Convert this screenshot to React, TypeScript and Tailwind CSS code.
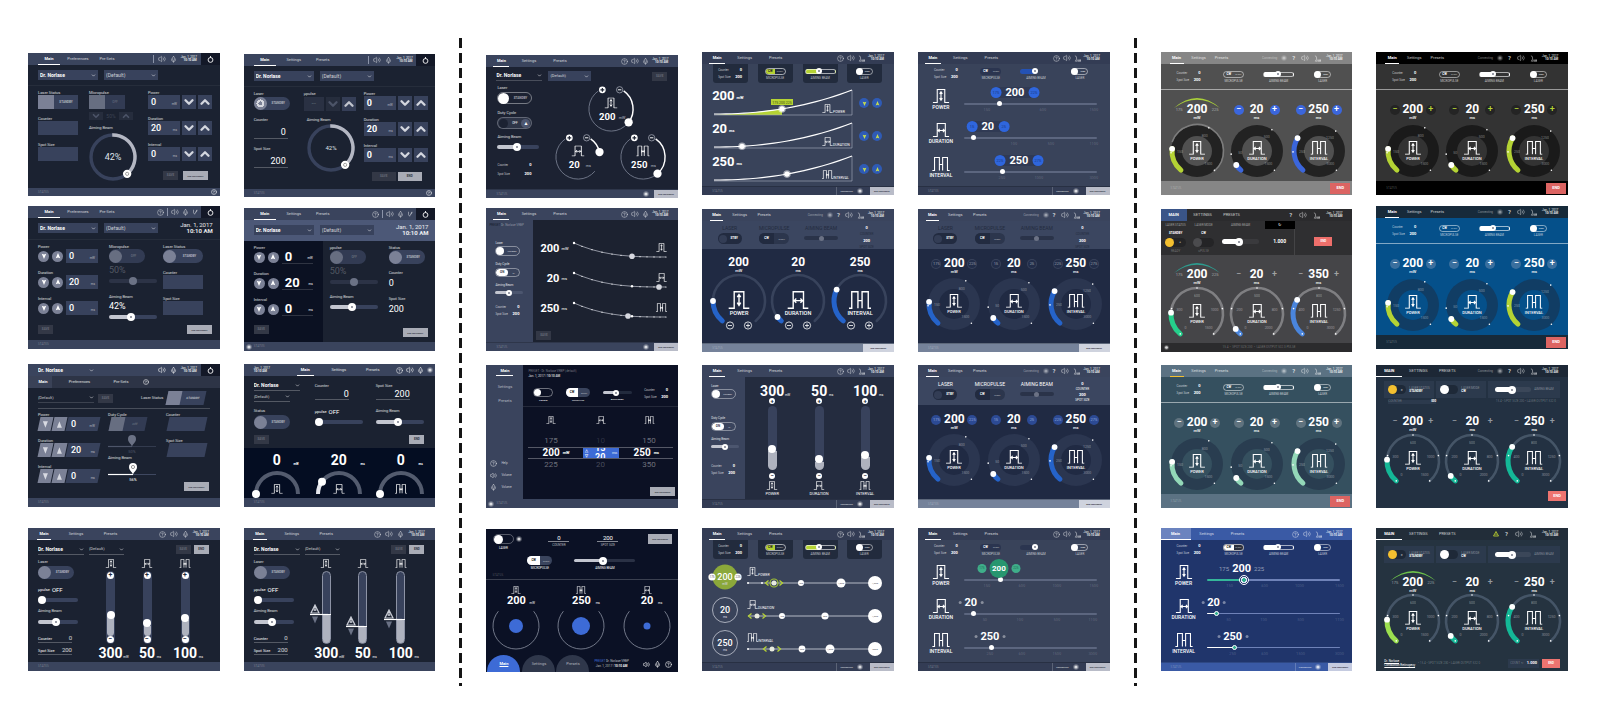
import type { ReactNode } from "react";
import { ChevronDown, ChevronUp, CircleHelp, Mic, Volume2 } from "lucide-react";

type Kind = "power" | "duration" | "interval";
const KINDS: Kind[] = ["power", "duration", "interval"];

const pt = (a: number, r: number): [number, number] => [
  r * Math.cos((a * Math.PI) / 180),
  r * Math.sin((a * Math.PI) / 180),
];
const arc = (r: number, a: number, b: number) => {
  const [x1, y1] = pt(a, r);
  const [x2, y2] = pt(b, r);
  return `M${x1.toFixed(2)} ${y1.toFixed(2)}A${r} ${r} 0 ${b - a > 180 ? 1 : 0} 1 ${x2.toFixed(2)} ${y2.toFixed(2)}`;
};

/* ---------- icons ---------- */

const PULSE: Record<Kind, string> = {
  power: "M1 25h8V1h14v24h8M16 5v16M13.500 9l2.500-4 2.500 4M13.500 17l2.500 4 2.500-4",
  duration: "M1 25h8V1h15v24h7M9 14h15M13.500 11l-3 3 3 3M19.500 11l3 3-3 3",
  interval: "M0 25h4V1h9v24M19 25V1h9v24h4M13 14h6M4 25h1M13 11v6M19 11v6M14 14h4",
};

function Pulse({ kind, className }: { kind: Kind; className?: string }) {
  return (
    <svg viewBox="0 0 32 26" className={className} fill="none" stroke="currentColor" strokeWidth="2" aria-hidden>
      <path d={PULSE[kind]} />
    </svg>
  );
}

function PulseMark({ kind, x, y, w }: { kind: Kind; x: number; y: number; w: number }) {
  return (
    <svg x={x} y={y} width={w} height={(w * 26) / 32} viewBox="0 0 32 26" fill="none" stroke="#fff" strokeWidth="2">
      <path d={PULSE[kind]} />
    </svg>
  );
}

function FootIcon() {
  return (
    <svg viewBox="0 0 16 16" className="size-[7px]" fill="none" stroke="currentColor" strokeWidth="1.5" aria-hidden>
      <path d="M2 1c5 3 5 9 1 13h4M9 14v-4M12 14v-4M15 14v-4M8 14h8" />
    </svg>
  );
}

function SlashIcon() {
  return (
    <svg viewBox="0 0 16 16" className="size-[6px]" fill="none" stroke="currentColor" strokeWidth="1.5" aria-hidden>
      <path d="M4 2v8l3 4L13 2M11 9l3-6" />
    </svg>
  );
}

function PowerIcon() {
  return (
    <svg viewBox="0 0 16 16" className="size-[7px]" fill="none" stroke="#fff" strokeWidth="2" aria-hidden>
      <circle cx="8" cy="9" r="5.5" />
      <path d="M8 0v4" />
    </svg>
  );
}

function Sun({ className = "size-[6px]" }: { className?: string }) {
  return (
    <svg viewBox="0 0 12 12" className={className} aria-hidden>
      <circle cx="6" cy="6" r="5.5" fill="#fff" opacity=".3" />
      <circle cx="6" cy="6" r="3.2" fill="#fff" opacity=".75" />
    </svg>
  );
}

/* ---------- shared controls ---------- */

type IconKey = "help" | "q" | "line" | "vol" | "mic" | "foot" | "slash" | "date" | "power" | "conn" | "sun" | "tri";

function HeaderIcon({ k }: { k: IconKey }) {
  switch (k) {
    case "help":
      return <CircleHelp className="size-[7px]" strokeWidth={1.8} />;
    case "q":
      return <span className="w-1 text-[6px] font-bold">?</span>;
    case "line":
      return <span className="h-2 w-px bg-[#8b93a8]" />;
    case "vol":
      return <Volume2 className="size-[8px]" strokeWidth={1.6} />;
    case "mic":
      return <Mic className="size-[7px]" strokeWidth={1.8} />;
    case "foot":
      return <FootIcon />;
    case "slash":
      return <SlashIcon />;
    case "sun":
      return <Sun />;
    case "tri":
      return (
        <svg viewBox="0 0 12 12" className="size-[6px]" fill="none" stroke="#c6dc2f" strokeWidth="1.6" aria-hidden>
          <path d="M6 1l5 9H1zM6 5v3" />
        </svg>
      );
    case "conn":
      return (
        <span className="flex items-center gap-1 text-[3px] opacity-60">
          Connecting
          <Sun />
        </span>
      );
    case "date":
      return <DateText />;
    case "power":
      return (
        <button aria-label="Power" className="flex h-full w-[19px] items-center justify-center bg-[#131827]">
          <PowerIcon />
        </button>
      );
  }
}

function DateText({ className = "w-4 text-right" }: { className?: string }) {
  return (
    <span className={`shrink-0 text-[3px] leading-[3px] whitespace-nowrap text-white/90 ${className}`}>
      Jan. 1, 2017
      <br />
      <b>10:10 AM</b>
    </span>
  );
}

interface HeaderProps {
  tabs?: string[];
  cols: string;
  bg: string;
  icons: IconKey[];
  end?: string;
  active?: string;
}

function Header({
  tabs = ["Main", "Settings", "Presets"],
  cols,
  bg,
  icons,
  end = "gap-[3px] pr-[10px]",
  active = "border-white",
}: HeaderProps) {
  return (
    <header className={`flex h-3 shrink-0 justify-between text-white/75 ${bg}`}>
      <nav className={`grid ${cols}`}>
        {tabs.map((t, i) => (
          <button
            key={t}
            className={`flex items-center justify-center border-b text-[4px] whitespace-nowrap ${
              i === 0 ? `font-bold text-white ${active}` : "border-transparent"
            }`}
          >
            {t}
          </button>
        ))}
      </nav>
      <div className={`flex items-center ${end}`}>
        {icons.map((k) => (
          <HeaderIcon key={k} k={k} />
        ))}
      </div>
    </header>
  );
}

const TABS_WIDE = "grid-cols-[22px_36px_22px] pl-[10px]";
const TABS_MID = "grid-cols-[14px_50px_19px] pl-[9px]";
const TABS_C = "grid-cols-[16px_39px_23px] pl-[7px]";
const TABS_D = "grid-cols-[13px_33px_16px] pl-[8px]";
const TABS_F = "grid-cols-[14px_30px_16px] pl-[9px]";
const TABS_CAPS = "grid-cols-[26px_32px_26px]";

function Panel({ bg, children }: { bg: string; children: ReactNode }) {
  return <article className={`flex h-[143px] flex-col overflow-hidden text-white ${bg}`}>{children}</article>;
}

function Status({
  bg = "bg-[#3a445d]",
  h = "h-[9px]",
  lead,
  children,
}: {
  bg?: string;
  h?: string;
  lead?: ReactNode;
  children?: ReactNode;
}) {
  return (
    <footer
      className={`mt-auto flex shrink-0 items-center gap-[2px] text-[3px] text-white/30 ${lead ? "pl-[2px]" : "pl-[10px]"} ${h} ${bg}`}
    >
      {lead}
      STATUS
      {children}
    </footer>
  );
}

function Small({ text, size = "text-[3px]", className }: { text: string; size?: string; className: string }) {
  return (
    <button className={`flex shrink-0 items-center justify-center font-bold whitespace-nowrap ${size} ${className}`}>
      {text}
    </button>
  );
}
const Save = ({ className = "h-[9px] w-[15px]" }: { className?: string }) => (
  <Small text="SAVE" className={`bg-[#333846] text-[#666b79] ${className}`} />
);
const End = ({ text = "END TREATMENT", className = "h-[9px] w-[25px]" }: { text?: string; className?: string }) => (
  <Small
    text={text}
    size={text === "END" ? "text-[3px]" : "text-[2px]"}
    className={`bg-[#a9acb6] text-[#2a2f3c] ${className}`}
  />
);

function Label({ children, size = "text-[4px]", className = "" }: { children: ReactNode; size?: string; className?: string }) {
  return <span className={`block h-[4px] whitespace-nowrap text-white/80 ${size} ${className}`}>{children}</span>;
}

function Pick({ value, name, className, bold }: { value: string; name: string; className: string; bold?: boolean }) {
  return (
    <label className={`flex h-[10px] items-center ${className}`}>
      <select
        aria-label={name}
        className={`min-w-0 flex-1 appearance-none bg-transparent leading-none ${bold ? "font-bold" : "text-white/75"}`}
      >
        <option>{value}</option>
      </select>
      <ChevronDown className="size-[5px] shrink-0 text-white/80" strokeWidth={3} />
    </label>
  );
}

function Toggle({
  name,
  text = "",
  box,
  knob,
  textClass = "text-[3px] text-white/60",
}: {
  name: string;
  text?: string;
  box: string;
  knob: string;
  textClass?: string;
}) {
  return (
    <button role="switch" aria-checked="false" aria-label={name} className={`flex shrink-0 items-center ${box}`}>
      <span className={`flex shrink-0 items-center justify-center ${knob}`} />
      <span className={`flex-1 text-center font-bold ${textClass}`}>{text}</span>
    </button>
  );
}

/* Two-way switch whose active half carries its own caption. */
function Duo({ a, b, box, on }: { a: string; b: string; box: string; on: string }) {
  return (
    <button
      role="switch"
      aria-checked="true"
      aria-label={`${a} / ${b}`}
      className={`flex items-stretch overflow-hidden rounded-full font-bold ${box}`}
    >
      <span className={`flex w-1/2 items-center justify-center text-[3px] ${on}`}>{a}</span>
      <span className="flex w-1/2 items-center justify-center text-[2px] text-white/50">{b}</span>
    </button>
  );
}

const THUMB =
  "[&::-webkit-slider-thumb]:appearance-none [&::-webkit-slider-thumb]:rounded-full [&::-webkit-slider-thumb]:bg-[radial-gradient(circle,#9a9da8_1px,#fff_1px)]";
const T_L = `${THUMB} [&::-webkit-slider-thumb]:size-[8px]`;
const T_M = `${THUMB} [&::-webkit-slider-thumb]:size-[6px]`;
const T_GRAY =
  "[&::-webkit-slider-thumb]:appearance-none [&::-webkit-slider-thumb]:rounded-full [&::-webkit-slider-thumb]:size-[8px] [&::-webkit-slider-thumb]:bg-[#6b7285]";
const T_GRAY_S =
  "[&::-webkit-slider-thumb]:appearance-none [&::-webkit-slider-thumb]:rounded-full [&::-webkit-slider-thumb]:size-[5px] [&::-webkit-slider-thumb]:bg-[#6b7285]";
const T_WHITE =
  "[&::-webkit-slider-thumb]:appearance-none [&::-webkit-slider-thumb]:rounded-full [&::-webkit-slider-thumb]:size-[8px] [&::-webkit-slider-thumb]:bg-white";
const T_PLAIN =
  "[&::-webkit-slider-thumb]:appearance-none [&::-webkit-slider-thumb]:rounded-full [&::-webkit-slider-thumb]:size-[5px] [&::-webkit-slider-thumb]:bg-white";
const T_RING =
  "[&::-webkit-slider-thumb]:appearance-none [&::-webkit-slider-thumb]:rounded-full [&::-webkit-slider-thumb]:size-[5px] [&::-webkit-slider-thumb]:border [&::-webkit-slider-thumb]:border-white [&::-webkit-slider-thumb]:bg-[#2fae8f]";
const T_RING_L =
  "[&::-webkit-slider-thumb]:appearance-none [&::-webkit-slider-thumb]:rounded-full [&::-webkit-slider-thumb]:size-[10px] [&::-webkit-slider-thumb]:border [&::-webkit-slider-thumb]:border-white [&::-webkit-slider-thumb]:bg-[radial-gradient(circle,#2fae8f_2px,#dfe6f5_2px,#dfe6f5_3px,#20356b_3px)]";

function Range({
  name,
  value,
  fill = "#c3c6d0",
  track = "#38425c",
  thumb = T_L,
  className = "h-1 w-full",
}: {
  name: string;
  value: number;
  fill?: string;
  track?: string;
  thumb?: string;
  className?: string;
}) {
  return (
    <input
      type="range"
      aria-label={name}
      defaultValue={value}
      className={`block appearance-none rounded-full ${thumb} ${className}`}
      style={{ background: `linear-gradient(to right, ${fill} ${value}%, ${track} ${value}%)` }}
    />
  );
}

function VRange({
  name,
  value,
  className,
  thumb,
  track = "#38425c",
}: {
  name: string;
  value: number;
  className: string;
  thumb: string;
  track?: string;
}) {
  return (
    <input
      type="range"
      aria-label={name}
      defaultValue={value}
      className={`block appearance-none rounded-full [direction:rtl] [writing-mode:vertical-lr] ${thumb} ${className}`}
      style={{ background: `linear-gradient(to top, #aeb2be ${value}%, ${track} ${value}%)` }}
    />
  );
}

/* ---------- first family: numeric entry screens ---------- */

const NAVY = "bg-[#1b2231]";
const BAR = "bg-[#3a445d]";
const BOX = "bg-[#38425c]";

function NumberBox({ v, unit, bold }: { v: string; unit: string; bold?: boolean }) {
  return (
    <span className={`flex h-[14px] w-8 items-center justify-between px-[3px] ${BOX}`}>
      <span className={`text-[9px] ${bold ? "font-bold" : "font-medium"}`}>{v}</span>
      <span className="mt-1 text-[3px] text-white/60">{unit}</span>
    </span>
  );
}

function Arrow({
  up,
  dim,
  className = "h-[14px] w-[14px]",
  icon = "size-[14px]",
}: {
  up?: boolean;
  dim?: boolean;
  className?: string;
  icon?: string;
}) {
  const I = up ? ChevronUp : ChevronDown;
  return (
    <button
      aria-label={up ? "Increase" : "Decrease"}
      className={`flex items-center justify-center ${dim ? "bg-[#262d3d] text-[#4c5468]" : `${BOX} text-[#d3d6de]`} ${className}`}
    >
      <I className={`shrink-0 ${icon}`} strokeWidth={4} />
    </button>
  );
}

const FIELDS: [string, string, string][] = [
  ["Power", "0", "mW"],
  ["Duration", "20", "ms"],
  ["Interval", "0", "ms"],
];

function StepperColumn({ bold }: { bold?: boolean }) {
  return (
    <div className="flex flex-col gap-2">
      {FIELDS.map(([l, v, u]) => (
        <div key={l}>
          <Label>{l}</Label>
          <div className="flex gap-[2px]">
            <NumberBox v={v} unit={u} bold={bold} />
            <Arrow />
            <Arrow up />
          </div>
        </div>
      ))}
    </div>
  );
}

function AimingRing({ small }: { small?: boolean }) {
  const [kx, ky] = pt(50, 22);
  return (
    <svg viewBox="-27 -27 54 54" className="size-[54px]" role="img" aria-label="Aiming beam 42%">
      <circle r="22" fill="none" stroke="#38425c" strokeWidth="3.4" />
      <path d={arc(22, -92, 50)} fill="none" stroke="#b4b7c2" strokeWidth="3.4" />
      <circle cx={kx} cy={ky} r="4.2" fill="#fff" />
      <circle cx={kx} cy={ky} r="1.6" fill="none" stroke="#666" strokeWidth=".6" />
      <text textAnchor="middle" y={small ? 2 : 3} fontSize={small ? 6 : 9} fill="#dfe1e8">
        42%
      </text>
    </svg>
  );
}

function PickRow({ className = "pt-[5px]" }: { className?: string }) {
  return (
    <div className={`flex gap-[6px] pl-[10px] ${className}`}>
      <Pick name="Physician" value="Dr. Norlase" bold className={`w-[60px] px-[2px] text-[5px] ${BOX}`} />
      <Pick name="Preset" value="(Default)" className={`w-[54px] px-[2px] text-[5px] ${BOX}`} />
    </div>
  );
}

function EntryOne() {
  const sq = `h-[14px] ${BOX}`;
  return (
    <Panel bg={NAVY}>
      <Header tabs={["Main", "Preferences", "Pre-Sets"]} cols={TABS_WIDE} bg={BAR} icons={["line", "vol", "mic", "date", "power"]} end="gap-[4px]" />
      <PickRow />
      <div className="mt-[5px] flex border-t border-white/5 pt-[5px] pl-[10px]">
        <div className="flex w-[51px] flex-col gap-2">
          <div>
            <Label>Laser Status</Label>
            <Toggle name="Laser Status" text="STANDBY" box={`w-10 ${sq}`} knob="h-[14px] w-4 bg-[#7b8196]" />
          </div>
          <div>
            <Label>Counter</Label>
            <div className={`w-10 ${sq}`} />
          </div>
          <div>
            <Label>Spot Size</Label>
            <div className={`w-10 ${sq}`} />
          </div>
        </div>
        <div className="w-[59px]">
          <Label>Micropulse</Label>
          <Toggle name="Micropulse" text="OFF" box={`w-9 ${sq} opacity-80`} knob="h-[14px] w-4 bg-[#7b8196]" textClass="text-[3px] text-white/25" />
          <div className="mt-[3px] flex w-11 items-center justify-between">
            <Arrow dim className="h-2 w-[14px]" icon="size-[10px]" />
            <span className="text-[5px] text-[#3b4254]">50%</span>
            <Arrow dim up className="h-2 w-[14px]" icon="size-[10px]" />
          </div>
          <Label className="mt-[6px]">Aiming Beam</Label>
          <div className="-ml-[3px]">
            <AimingRing />
          </div>
        </div>
        <div>
          <StepperColumn />
          <div className="mt-[10px] flex gap-[5px] pl-[15px]">
            <Save />
            <End />
          </div>
        </div>
      </div>
      <Status h="h-[8px]">
        <CircleHelp className="mr-[3px] ml-auto size-[6px] text-white" />
      </Status>
    </Panel>
  );
}

function EntryTwo() {
  return (
    <Panel bg={NAVY}>
      <Header cols={TABS_WIDE} bg={BAR} icons={["line", "vol", "mic", "date", "power"]} end="gap-[4px]" />
      <PickRow />
      <div className="mt-[5px] flex border-t border-white/5 pt-[5px] pl-[10px]">
        <div className="w-[50px]">
          <Label>Laser</Label>
          <Toggle
            name="Laser"
            text="STANDBY"
            box={`mt-px h-[13px] w-9 rounded-full ${BOX}`}
            knob="size-[13px] rounded-full bg-[radial-gradient(circle,#7b8196_2px,#d6d8df_2px,#d6d8df_4px,#7b8196_4px)]"
          />
          <Label className="mt-2">Counter</Label>
          <p className="mt-1 flex h-[13px] w-[34px] items-center justify-end border-b border-white/25 pr-[2px] text-[9px]">0</p>
          <Label className="mt-2">Spot Size</Label>
          <p className="mt-1 flex h-[13px] w-[34px] items-center justify-end border-b border-white/25 pr-[2px] text-[9px]">200</p>
        </div>
        <div className="w-[60px]">
          <Label>µpulse</Label>
          <div className="mt-px flex gap-[2px]">
            <span className="flex h-[14px] w-[20px] items-center justify-center bg-[#2a3143] text-[8px] text-white/25">--</span>
            <Arrow dim />
            <Arrow up className="h-[14px] w-[14px] opacity-90" />
          </div>
          <Label className="mt-[7px] pl-[3px]">Aiming Beam</Label>
          <div className="-mt-px">
            <AimingRing small />
          </div>
        </div>
        <div>
          <StepperColumn bold />
          <div className="mt-[10px] flex gap-[2px] pl-2">
            <Save className="h-[9px] w-[24px]" />
            <End text="END" className="h-[9px] w-[24px]" />
          </div>
        </div>
      </div>
      <Status h="h-[8px]">
        <CircleHelp className="mr-[3px] ml-auto size-[6px] text-white" />
      </Status>
    </Panel>
  );
}

function RoundStep({ up }: { up?: boolean }) {
  return (
    <button
      aria-label={up ? "Increase" : "Decrease"}
      className="flex size-[11px] items-center justify-center rounded-full bg-[#7b8196] text-white"
    >
      <svg viewBox="0 0 8 8" className="size-[6px]" fill="#fff" aria-hidden>
        <path d={up ? "M4 0l3 7-3-1-3 1z" : "M4 8L1 1l3 1 3-1z"} />
      </svg>
    </button>
  );
}

function BigDate() {
  return (
    <p className="mr-[7px] ml-auto text-right text-[6px] text-white/90">
      Jan. 1, 2017
      <br />
      <b>10:10 AM</b>
    </p>
  );
}

function EntryThree() {
  return (
    <Panel bg={NAVY}>
      <Header tabs={["Main", "Preferences", "Pre-Sets"]} cols={TABS_WIDE} bg={BAR} icons={["help", "line", "vol", "mic", "slash", "power"]} end="gap-[3px]" />
      <div className="flex items-start pt-[4px]">
        <PickRow className="pt-px" />
        <BigDate />
      </div>
      <div className="mt-[5px] flex border-t border-white/5 pt-[5px] pl-[10px]">
        <div className="w-[71px]">
          <div className="flex flex-col gap-2">
            {FIELDS.map(([l, v, u]) => (
              <div key={l}>
                <Label>{l}</Label>
                <div className="flex items-center gap-[3px]">
                  <RoundStep />
                  <RoundStep up />
                  <NumberBox v={v} unit={u} />
                </div>
              </div>
            ))}
          </div>
          <Save className="mt-[10px] h-[9px] w-[15px]" />
        </div>
        <div className="w-[54px]">
          <Label>Micropulse</Label>
          <Toggle name="Micropulse" text="OFF" box={`h-[14px] w-9 rounded-full ${BOX} opacity-80`} knob="size-[13px] rounded-full bg-[#7b8196]" textClass="text-[3px] text-white/30" />
          <p className="mt-[3px] text-[9px] text-white/25">50%</p>
          <Range name="Micropulse duty" value={50} fill="#2c3346" track="#2c3346" thumb={T_GRAY} className="mt-[4px] h-1 w-12" />
          <Label className="mt-[12px]">Aiming Beam</Label>
          <p className="mt-[3px] text-[9px]">42%</p>
          <Range name="Aiming Beam" value={45} className="mt-[4px] h-1 w-12" />
        </div>
        <div className="flex flex-col gap-2">
          <div>
            <Label>Laser Status</Label>
            <Toggle name="Laser Status" text="STANDBY" box={`h-[14px] w-10 rounded-full ${BOX}`} knob="size-[13px] rounded-full bg-[#7b8196]" />
          </div>
          <div>
            <Label>Counter</Label>
            <div className={`h-[14px] w-10 ${BOX}`} />
          </div>
          <div>
            <Label>Spot Size</Label>
            <div className={`h-[14px] w-10 ${BOX}`} />
          </div>
          <End className="mt-[2px] ml-[24px] h-[9px] w-[25px]" />
        </div>
      </div>
      <Status />
    </Panel>
  );
}

function EntryFour() {
  return (
    <Panel bg={NAVY}>
      <Header cols={TABS_WIDE} bg={BAR} icons={["help", "line", "vol", "mic", "slash", "power"]} end="gap-[3px]" />
      <div className="flex h-[21px] shrink-0 items-start bg-[#4c5877] pt-[4px]">
        <PickRow className="pt-px" />
        <BigDate />
      </div>
      <div className="flex flex-1">
        <div className="w-[79px] bg-[#0b1122] pt-[5px] pl-[10px]">
          <div className="flex flex-col gap-2">
            {FIELDS.map(([l, v, u]) => (
              <div key={l}>
                <Label>{l}</Label>
                <div className="flex h-[14px] items-center gap-[3px]">
                  <RoundStep />
                  <RoundStep up />
                  <span className="flex h-[14px] w-[31px] items-center justify-between border-b border-white/15 pl-[3px]">
                    <span className="text-[13px] font-bold">{v}</span>
                    <span className="mt-1 text-[3px]">{u}</span>
                  </span>
                </div>
              </div>
            ))}
          </div>
          <Save className="mt-[9px] h-[9px] w-[15px]" />
        </div>
        <div className="w-[66px] pt-[5px] pl-[7px]">
          <Label>µpulse</Label>
          <Toggle name="Micropulse" text="OFF" box={`h-[14px] w-9 rounded-full ${BOX} opacity-80`} knob="size-[13px] rounded-full bg-[#7b8196]" textClass="text-[3px] text-white/30" />
          <p className="mt-[3px] text-[9px] text-white/25">50%</p>
          <Range name="Micropulse duty" value={50} fill="#2c3346" track="#2c3346" thumb={T_GRAY} className="mt-[4px] h-1 w-12" />
          <Label className="mt-[11px]">Aiming Beam</Label>
          <Range name="Aiming Beam" value={45} className="mt-[6px] h-1 w-12" />
        </div>
        <div className="pt-[5px]">
          <Label>Status</Label>
          <Toggle name="Status" text="STANDBY" box={`h-[14px] w-9 rounded-full ${BOX}`} knob="size-[13px] rounded-full bg-[#7b8196]" />
          <Label className="mt-[7px]">Counter</Label>
          <p className="mt-1 text-[9px]">0</p>
          <Label className="mt-[9px]">Spot Size</Label>
          <p className="mt-1 text-[9px]">200</p>
          <End className="mt-[14px] ml-[14px] h-[9px] w-[25px]" />
        </div>
      </div>
      <Status lead={<Sun />} />
    </Panel>
  );
}

function PinSlider({ value, text, dim }: { value: number; text: string; dim?: boolean }) {
  const c = dim ? "#6b7285" : "#fff";
  return (
    <svg viewBox="0 0 48 21" className="h-[21px] w-12" role="img" aria-label={text}>
      <path d="M0 12.5h48" stroke={dim ? "#333b4e" : "#3f4860"} strokeWidth="1.2" />
      <path d={`M0 12.5H${value}`} stroke={dim ? "#4d5569" : "#fff"} strokeWidth="1.2" />
      <path d={`M${value} 12.5c-1-3-4-4-4-7.500a4 4 0 0 1 8 0c0 3.500-3 4.500-4 7.500z`} fill={c} />
      {!dim && <circle cx={value} cy="5" r="1.600" fill="none" stroke="#555" strokeWidth=".6" />}
      <text x={value} y="19" textAnchor="middle" fontSize="4" fill={dim ? "#4d5569" : "#fff"}>
        {text}
      </text>
    </svg>
  );
}

function EntrySkew() {
  const sk = `h-[14px] -skew-x-12 ${BOX}`;
  return (
    <Panel bg={NAVY}>
      <div className={`flex h-3 shrink-0 items-center pl-[10px] ${BAR}`}>
        <Pick name="Physician" value="Dr. Norlase" bold className="w-[56px] text-[5px]" />
        <div className="ml-auto flex h-full items-center gap-[4px]">
          {(["vol", "mic", "date", "power"] as IconKey[]).map((k) => (
            <HeaderIcon key={k} k={k} />
          ))}
        </div>
      </div>
      <nav className="flex h-3 shrink-0 items-center bg-[#2d3446] text-[4px]">
        <button className="h-full w-6 bg-[#3a4257] pl-[6px] font-bold">Main</button>
        <button className="w-[55px] text-white/80">Preferences</button>
        <button className="w-7 text-white/80">Pre-Sets</button>
        <CircleHelp className="ml-2 size-[6px]" />
      </nav>
      <div className="flex h-[20px] shrink-0 items-center pl-[10px]">
        <Pick name="Preset" value="(Default)" className="w-[56px] border-b border-white/15 text-[4px]" />
        <Save className="ml-[4px] h-[9px] w-[15px]" />
        <Label className="mr-1 ml-[28px]">Laser Status</Label>
        <Toggle name="Laser Status" text="STANDBY" box={`w-[38px] ${sk}`} knob="h-[14px] w-[14px] bg-[#7b8196]" />
      </div>
      <div className="mx-[10px] h-px shrink-0 bg-white/20" />
      <div className="flex pt-[4px] pl-[10px]">
        <div className="flex w-[70px] flex-col gap-2">
          {FIELDS.map(([l, v, u]) => (
            <div key={l}>
              <Label>{l}</Label>
              <div className="flex gap-px pl-px">
                {[false, true].map((up) => (
                  <button key={String(up)} aria-label={up ? "Increase" : "Decrease"} className="flex h-[14px] w-[13px] -skew-x-12 items-center justify-center bg-[#7b8196]">
                    <svg viewBox="0 0 6 8" className="h-[7px] w-[5px] skew-x-12" fill="#d8dae2" aria-hidden>
                      <path d={up ? "M3 0l3 8H0z" : "M3 8L0 0h6z"} />
                    </svg>
                  </button>
                ))}
                <span className={`flex w-[32px] items-center ${sk}`}>
                  <span className="flex flex-1 skew-x-12 items-center justify-between px-[4px]">
                    <span className="text-[9px] font-medium">{v}</span>
                    <span className="mt-1 text-[3px] text-white/60">{u}</span>
                  </span>
                </span>
              </div>
            </div>
          ))}
        </div>
        <div className="w-[58px]">
          <Label>Duty Cycle</Label>
          <Toggle name="Duty Cycle" text="OFF" box={`ml-[2px] w-[36px] ${sk} opacity-80`} knob="h-[14px] w-[14px] bg-[#7b8196]" textClass="text-[3px] text-white/30" />
          <div className="mt-[3px]">
            <PinSlider dim value={24} text="50%" />
          </div>
          <Label className="mt-px">Aiming Beam</Label>
          <div className="mt-[2px]">
            <PinSlider value={25} text="56%" />
          </div>
        </div>
        <div>
          <Label>Counter</Label>
          <div className={`ml-[2px] w-[38px] ${sk}`} />
          <Label className="mt-2">Spot Size</Label>
          <div className={`ml-[2px] w-[38px] ${sk}`} />
          <End className="mt-[25px] ml-[18px] h-[9px] w-[25px]" />
        </div>
      </div>
      <Status />
    </Panel>
  );
}

function HalfDials() {
  const ends = [180, 216, 180];
  return (
    <Panel bg={NAVY}>
      <header className={`flex h-3 shrink-0 items-stretch pl-[10px] ${BAR}`}>
        <div className="flex w-[43px] items-center">
          <DateText className="text-left" />
        </div>
        <nav className="grid grid-cols-[17px_50px_18px] text-[4px]">
          <button className="border-b border-white font-bold">Main</button>
          <button className="text-white/80">Settings</button>
          <button className="text-white/80">Presets</button>
        </nav>
        <div className="mr-[2px] ml-auto flex items-center gap-[3px]">
          {(["help", "vol", "mic", "sun"] as IconKey[]).map((k) => (
            <HeaderIcon key={k} k={k} />
          ))}
        </div>
      </header>
      <div className="grid shrink-0 grid-cols-[61px_61px_58px] pt-[5px] pl-[10px]">
        <div className="h-[26px]">
          <Pick name="Physician" value="Dr. Norlase" bold className="w-[46px] border-b border-white/25 text-[5px]" />
          <Pick name="Preset" value="(Default)" className="mt-px w-[36px] border-b border-white/25 text-[4px]" />
        </div>
        <div>
          <Label className="mt-[3px]">Counter</Label>
          <p className="flex h-[12px] w-[34px] items-end justify-end border-b border-white/25 text-[9px]">0</p>
        </div>
        <div>
          <Label className="mt-[3px]">Spot Size</Label>
          <p className="flex h-[12px] w-[34px] items-end justify-end border-b border-white/25 text-[9px]">200</p>
        </div>
        <div className="pt-[2px]">
          <Label>Status</Label>
          <Toggle name="Status" text="STANDBY" box={`mt-[2px] h-[14px] w-9 rounded-full ${BOX}`} knob="size-[13px] rounded-full bg-[#7b8196]" />
        </div>
        <div className="pt-[2px]">
          <div className="flex h-[5px] items-center gap-[2px] text-[4px]">
            µpulse <span className="text-[6px]">OFF</span>
          </div>
          <Range name="Micropulse" value={1} thumb={T_WHITE} className="mt-[6px] h-1 w-12" />
        </div>
        <div className="pt-[2px]">
          <Label>Aiming Beam</Label>
          <Range name="Aiming Beam" value={46} className="mt-[7px] h-1 w-12" />
        </div>
      </div>
      <div className="mt-[6px] mb-[4px] flex shrink-0 justify-between pr-[11px] pl-[10px]">
        <Save />
        <End text="END" className="h-[9px] w-[15px]" />
      </div>
      <div className="grid min-h-0 flex-1 grid-cols-[66px_58px_66px] overflow-hidden bg-[#040d22] pt-[5px]">
        {KINDS.map((k, i) => {
          const [x, y] = pt(ends[i], 21);
          return (
            <div key={k} className="flex flex-col items-center">
              <p className="relative text-[14px] font-bold">
                {["0", "20", "0"][i]}
                <span className="absolute right-[-18px] bottom-px text-[3px]">{i ? "ms" : "mW"}</span>
              </p>
              <svg viewBox="-27 -27 54 54" className="size-[54px] shrink-0" role="img" aria-label={k}>
                <path d={arc(21, 180, 360)} stroke="#535b6e" strokeWidth="4" fill="none" />
                {i === 1 && <path d={arc(21, 180, 216)} stroke="#e4e6ec" strokeWidth="4" fill="none" />}
                <circle cx={x} cy={y} r="4" fill="#fff" />
                <PulseMark kind={k} x={-6} y={-10} w={12} />
              </svg>
            </div>
          );
        })}
      </div>
      <Status />
    </Panel>
  );
}

const TALL: [string, string, number][] = [
  ["300", "mW", 35],
  ["50", "ms", 18],
  ["100", "ms", 28],
];

function Underlined({ l, v }: { l: string; v: string }) {
  return (
    <p className="flex h-[8px] w-[34px] items-end justify-between border-b border-white/25 pb-px text-[4px]">
      {l} <span className="text-[6px] text-white/80">{v}</span>
    </p>
  );
}

function Bars({ tubes }: { tubes?: boolean }) {
  return (
    <Panel bg={NAVY}>
      <Header cols={TABS_MID} bg={BAR} icons={["help", "vol", "mic", "date"]} end="gap-[4px] pr-[11px]" />
      <div className="flex h-[17px] shrink-0 items-center pt-[2px] pr-[11px] pl-[10px]">
        <Pick name="Physician" value="Dr. Norlase" bold className="w-[46px] border-b border-white/25 text-[5px]" />
        <Pick name="Preset" value="(Default)" className="ml-[5px] w-[35px] border-b border-white/25 text-[4px]" />
        <Save className="mr-[3px] ml-auto h-[9px] w-[15px]" />
        <End text="END" className="h-[9px] w-[15px]" />
      </div>
      <div className="flex pl-[10px]">
        <div className="w-[55px] pt-[3px]">
          <Label>Laser</Label>
          <Toggle name="Laser" text="STANDBY" box={`mt-[2px] h-[13px] w-9 rounded-full ${BOX}`} knob="size-[13px] rounded-full bg-[#7b8196]" />
          <div className="mt-[8px] flex h-[6px] items-center gap-[2px] text-[4px]">
            µpulse <span className="text-[6px]">OFF</span>
          </div>
          <Range name="Micropulse" value={1} thumb={T_WHITE} className="mt-[5px] h-1 w-10" />
          <Label className="mt-[7px]">Aiming Beam</Label>
          <Range name="Aiming Beam" value={45} className="mt-[7px] h-1 w-10" />
          <div className="mt-[11px] flex flex-col gap-[4px]">
            <Underlined l="Counter" v="0" />
            <Underlined l="Spot Size" v="200" />
          </div>
        </div>
        <div className="grid grid-cols-[35px_38px_38px]">
          {TALL.map(([v, u, n], i) => (
            <div key={v} className="flex flex-col items-center">
              <Pulse kind={KINDS[i]} className="mt-[2px] h-[9px] w-[12px] shrink-0" />
              {tubes ? (
                <div className="relative mt-[3px] h-[73px]">
                  <VRange name={KINDS[i]} value={n + 5} className="h-[73px] w-[9px] border border-[#8d93a5]" thumb="[&::-webkit-slider-thumb]:appearance-none [&::-webkit-slider-thumb]:h-px [&::-webkit-slider-thumb]:w-[9px] [&::-webkit-slider-thumb]:bg-white" />
                  <svg viewBox="0 0 18 22" className="absolute right-[3px] h-[22px] w-[18px]" style={{ bottom: `${n - 10}%` }} aria-hidden>
                    <path d="M5 1l4 8H1zM5 3v4M3.500 6h3" fill="none" stroke="#c9ccd5" strokeWidth="1.200" />
                    <path d="M0 10.500h18" stroke="#fff" strokeWidth="1.200" />
                    <path d="M2 12.500h6l-3 7z" fill="#6b7285" />
                  </svg>
                </div>
              ) : (
                <div className="mt-[3px] flex h-[73px] w-[9px] flex-col items-center justify-between rounded-full bg-[#38425c] py-px">
                  <button aria-label="Increase" className="flex size-[7px] shrink-0 items-center justify-center rounded-full bg-white text-[7px] font-bold text-[#222a3b]">
                    +
                  </button>
                  <VRange name={KINDS[i]} value={n} className="h-[57px] w-[7px]" thumb={T_WHITE} />
                  <button aria-label="Decrease" className="flex size-[7px] shrink-0 items-center justify-center rounded-full bg-white text-[7px] font-bold text-[#222a3b]">
                    −
                  </button>
                </div>
              )}
              <p className="relative mt-[2px] text-[14px] font-bold">
                {v}
                <span className="absolute right-[-6px] bottom-px text-[3px] font-normal">{u}</span>
              </p>
            </div>
          ))}
        </div>
      </div>
      <Status />
    </Panel>
  );
}

/* ---------- second family ---------- */

function MiniCounter({ className = "w-[24px]", a = "0" }: { className?: string; a?: string }) {
  return (
    <div className={`flex flex-col gap-[3px] text-[3px] ${className}`}>
      <p className="flex items-center justify-between text-white/70">
        Counter <b className="text-[4px] text-white">{a}</b>
      </p>
      <p className="flex items-center justify-between text-white/70">
        Spot Size <b className="text-[4px] text-white">200</b>
      </p>
    </div>
  );
}

function EndFooter({
  bg = "bg-[#333c54]",
  conn,
  endBg = "bg-[#b9bcc8] text-[#2a2f3c]",
  endW = "w-[24px]",
}: {
  bg?: string;
  conn: "text" | "sun" | "none";
  endBg?: string;
  endW?: string;
}) {
  return (
    <footer className={`mt-auto flex h-[9px] shrink-0 items-center border-t border-black/20 pl-[10px] text-[3px] text-white/30 ${bg}`}>
      STATUS
      {conn === "text" && (
        <span className="ml-auto flex h-full items-center gap-[4px] border-l border-white/20 px-[3px] text-[2px] text-white/80">
          CONNECTING <Sun className="mr-[4px] size-[6px]" />
        </span>
      )}
      {conn === "sun" && <Sun className="mr-[5px] ml-auto size-[6px]" />}
      <Small text="END TREATMENT" size="text-[2px]" className={`h-full ${endW} ${endBg} ${conn === "none" ? "ml-auto" : ""}`} />
    </footer>
  );
}

function RingDial({ kind, value, unit, end }: { kind: Kind; value: string; unit: string; end: number }) {
  const [x, y] = pt(end, 23);
  return (
    <svg viewBox="-25 -25 50 50" className="h-[48px] w-[50px] overflow-visible" role="img" aria-label={`${kind} ${value}`}>
      <path d={arc(23, 40, 235)} fill="none" stroke="#6f7688" strokeWidth="1" />
      <path d={arc(23, -55, end)} fill="none" stroke="#fff" strokeWidth="1.500" />
      <circle cx="-9" cy="-20" r="3.500" fill="#fff" />
      <path d="M-11-20h4M-9-22v4" stroke="#1b2231" strokeWidth="1.200" />
      <circle cx="9" cy="-20" r="3.300" fill="#1b2231" stroke="#a5a9b6" strokeWidth=".8" />
      <path d="M7.200-20h3.600" stroke="#fff" strokeWidth="1" />
      <circle cx={x} cy={y} r="4.300" fill="#fff" />
      <PulseMark kind={kind} x={-7} y={-12} w={14} />
      <text x="-4" y="11" textAnchor="middle" fontSize="10" fontWeight="700" fill="#fff">
        {value}
      </text>
      <text x="8" y="10" fontSize="4" fill="#b7bac5">
        {unit}
      </text>
    </svg>
  );
}

const HEAD_C: IconKey[] = ["help", "vol", "mic", "date"];
const HEAD_D: IconKey[] = ["help", "vol", "foot", "date"];

function Rings() {
  return (
    <Panel bg="bg-[#1c2232]">
      <Header cols={TABS_C} bg={BAR} icons={HEAD_C} />
      <div className="flex h-[18px] shrink-0 items-center pr-[11px] pl-[10px]">
        <Pick name="Physician" value="Dr. Norlase" bold className="w-[46px] border-b border-white/20 text-[5px]" />
        <Pick name="Preset" value="(Default)" className={`ml-[6px] w-[43px] px-[2px] text-[4px] ${BOX}`} />
        <Save className="ml-auto h-[9px] w-[15px]" />
      </div>
      <div className="flex pl-[11px]">
        <div className="w-[56px] pt-px">
          <Label>Laser</Label>
          <Toggle name="Laser" text="STANDBY" box="mt-[2px] h-[12px] w-[35px] rounded-full border border-white/40" knob="size-[11px] rounded-full bg-white" />
          <Label className="mt-[7px]">Duty Cycle</Label>
          <div className="mt-[2px] flex h-[12px] w-[35px] items-center justify-between rounded-full border border-white/25 bg-[#2e3547] p-px text-[3px]">
            <span className="size-[9px] rounded-full bg-[#1c2232]" />
            OFF
            <button aria-label="Increase duty" className="size-[9px] rounded-full bg-[#4e5770] text-[5px]">
              ▲
            </button>
          </div>
          <Label className="mt-[6px]">Aiming Beam</Label>
          <Range name="Aiming Beam" value={45} className="mt-[6px] h-1 w-[42px]" />
          <MiniCounter className="mt-[14px] w-[34px] gap-[5px]" />
        </div>
        <div className="flex w-[115px] flex-col items-center">
          <RingDial kind="power" value="200" unit="mW" end={37} />
          <div className="flex gap-[15px]">
            <RingDial kind="duration" value="20" unit="ms" end={-13} />
            <RingDial kind="interval" value="250" unit="ms" end={49} />
          </div>
        </div>
      </div>
      <EndFooter bg={BAR} conn="sun" />
    </Panel>
  );
}

function SideControls({ solid }: { solid?: boolean }) {
  return (
    <aside className="shrink-0 pl-[9px]">
      <Label size="text-[3px]">Laser</Label>
      <Toggle name="Laser" text="STANDBY" box="h-[10px] w-[25px] rounded-full border border-white/40" knob="size-[8px] rounded-full bg-white" textClass="text-[2px] text-white/70" />
      <Label size="text-[3px]" className={solid ? "mt-[18px]" : "mt-[7px]"}>
        Duty Cycle
      </Label>
      <Duo a="ON" b="uP" box="mt-px h-[9px] w-[25px] border border-white/40" on="bg-white text-[#2a3142] rounded-full" />
      <Label size="text-[3px]" className="mt-[7px]">
        Aiming Beam
      </Label>
      <Range name="Aiming Beam" value={48} track="#4c566f" className="mt-[3px] h-[3px] w-[28px]" thumb={T_M} />
      <MiniCounter className={solid ? "mt-[16px] w-[24px]" : "mt-[11px] w-[24px]"} />
    </aside>
  );
}

const TRIO: [string, string][] = [
  ["200", "mW"],
  ["20", "ms"],
  ["250", "ms"],
];

function Curves() {
  const knob = [58, 85, 54];
  const dots = [0, 8, 18, 28, 38, 47, 58, 66, 73, 80, 86, 92];
  const yAt = (x: number) => 2 + 14 * (1 - Math.pow(1 - x / 93, 3));
  return (
    <Panel bg="bg-[#1c2230]">
      <Header cols={TABS_C} bg={BAR} icons={HEAD_C} />
      <div className="flex flex-1">
        <div className="w-[47px] bg-[#3a445d] pt-[4px]">
          <p className="h-[18px] pl-[3px] text-[3px] whitespace-nowrap text-white/40">
            <span className="text-[#151b2b]">PRESET</span> Dr. Norlase VRBP
          </p>
          <SideControls />
        </div>
        <div className="flex flex-1 flex-col pt-[21px] pl-[6px]">
          {KINDS.map((k, i) => (
            <div key={k} className="flex h-[30px] shrink-0">
              <p className="mt-[2px] flex w-[30px] items-center justify-end gap-[2px] self-start text-[11px] font-bold">
                {TRIO[i][0]}
                <span className="w-[8px] text-[4px] font-normal">{TRIO[i][1]}</span>
              </p>
              <svg viewBox="0 0 98 22" className="ml-[3px] h-[22px] w-[98px]" role="img" aria-label={k}>
                <polyline fill="none" stroke="#aeb2be" strokeWidth=".8" points={dots.map((d) => `${d + 2},${yAt(d)}`).join(" ")} />
                {dots.map((d, j) => (
                  <circle key={d} cx={d + 2} cy={yAt(d)} r={j % 6 ? 0.6 : 1.2} fill="#fff" />
                ))}
                <circle cx={knob[i] + 2} cy={yAt(knob[i])} r="2.800" fill="#d6d8df" />
                <PulseMark kind={k} x={84} y={2} w={11} />
              </svg>
            </div>
          ))}
          <Save className="-ml-[3px] h-[9px] w-[15px]" />
        </div>
      </div>
      <EndFooter bg={BAR} conn="sun" />
    </Panel>
  );
}

function Wheels() {
  return (
    <Panel bg="bg-[#0c1124]">
      <div className="flex min-h-0 flex-1">
        <aside className="flex w-[37px] flex-col bg-[#3a445d] pt-[4px]">
          <nav className="flex flex-col items-center gap-[9px] text-[4px]">
            <button className="border-b border-white px-[4px] pb-[2px] font-bold">Main</button>
            <button className="text-white/60">Settings</button>
            <button className="mt-px text-white/60">Presets</button>
          </nav>
          <div className="mt-auto mb-2 flex flex-col gap-[5px] pl-1 text-[3px] text-white/70">
            <span className="flex items-center gap-[4px]">
              <CircleHelp className="size-[7px]" /> Help
            </span>
            <span className="flex items-center gap-[4px]">
              <Volume2 className="size-[7px]" /> Volume
            </span>
            <span className="flex items-center gap-[4px]">
              <Mic className="size-[7px]" /> Volume
            </span>
          </div>
        </aside>
        <div className="flex flex-1 flex-col">
          <div className="h-[14px] shrink-0 pt-[4px] pl-[5px] text-[3px] leading-[5px] text-white/40">
            <p>PRESET · Dr. Norlase VRBP (default)</p>
            <p className="text-white/80">
              Jan. 1, 2017 | <b>10:10 AM</b>
            </p>
          </div>
          <div className="flex h-[28px] shrink-0 items-start justify-between border-b border-white/10 pt-[9px] pr-[10px] pl-[10px]">
            <div className="flex flex-col items-center gap-[2px] text-[2px]">
              <Toggle name="Laser" box="h-[9px] w-[20px] rounded-full border border-white/40" knob="size-[7px] rounded-full bg-white" />
              STANDBY
            </div>
            <div className="flex flex-col items-center gap-[2px] text-[2px]">
              <Duo a="CW" b="uPulse" box="h-[9px] w-[24px] bg-[#3a445d]" on="bg-white text-[#222]" />
              MICROPULSE
            </div>
            <div className="flex flex-col items-center gap-[4px] pt-[3px] text-[2px]">
              <Range name="Aiming Beam" value={46} track="#222a3d" className="h-[3px] w-[29px]" thumb={T_M} />
              AIMING BEAM
            </div>
            <MiniCounter />
          </div>
          <div className="grid shrink-0 grid-cols-[52px_48px_49px] pt-[9px] pl-[2px]">
            {KINDS.map((k) => (
              <Pulse key={k} kind={k} className="h-[8px] w-full" />
            ))}
          </div>
          <div className="mt-[13px] grid shrink-0 grid-cols-[55px_44px_53px] text-center text-white/40">
            <p className="text-[8px]">175</p>
            <p className="text-[8px] text-white/15">10</p>
            <p className="text-[8px]">150</p>
          </div>
          <div className="mx-[5px] mt-[2px] grid h-[12px] shrink-0 grid-cols-[55px_36px_1fr] items-center border-y border-white/30 text-[10px] font-bold">
            <p className="flex items-center gap-[3px] pl-[14px]">
              200 <span className="text-[4px]">mW</span>
            </p>
            <p className="flex h-full items-center justify-between overflow-hidden bg-[#3d6bd6] px-[2px]">
              <span className="text-[4px] leading-[5px]">
                △<br />▽
              </span>
              <span className="text-[9px] leading-[9px]">
                15
                <br />
                20
              </span>
              <span className="text-[4px] text-white/60">ms</span>
            </p>
            <p className="flex items-center justify-center gap-[3px]">
              250 <span className="text-[4px]">ms</span>
            </p>
          </div>
          <div className="mt-[2px] grid shrink-0 grid-cols-[55px_44px_53px] text-center text-white/40">
            <p className="text-[8px]">225</p>
            <p className="text-[8px] text-white/25">20</p>
            <p className="text-[8px]">350</p>
          </div>
          <End className="mt-auto mr-[3px] mb-[3px] ml-auto h-[9px] w-[25px]" />
        </div>
      </div>
      <Status lead={<Sun />} />
    </Panel>
  );
}

function Orbits() {
  const dots = [7, 9, 3.5];
  const order: Kind[] = ["power", "interval", "duration"];
  const vals = ["200", "250", "20"];
  return (
    <Panel bg="bg-[#0b1125]">
      <div className="flex h-[22px] shrink-0 items-start pt-[5px] pr-[6px] pl-[6px] text-[3px]">
        <div className="flex w-[22px] flex-col items-center gap-[3px]">
          <Toggle name="Laser" box="h-[10px] w-[21px] rounded-full border border-white/30" knob="size-[9px] rounded-full bg-white" />
          LASER
        </div>
        <Sun className="mt-[2px] ml-[2px] size-[6px]" />
        <p className="ml-[26px] flex w-[21px] flex-col items-center">
          <span className="w-full border-b border-white/50 text-center text-[6px] leading-[7px]">0</span>
          <span className="pt-[2px] text-white/70">COUNTER</span>
        </p>
        <p className="ml-[28px] flex w-[21px] flex-col items-center">
          <span className="w-full border-b border-white/50 text-center text-[6px] leading-[7px]">200</span>
          <span className="pt-[2px] text-white/70">SPOT SIZE</span>
        </p>
        <End className="ml-auto h-[10px] w-[24px]" />
      </div>
      <div className="flex h-[22px] shrink-0 items-start pt-[5px] pl-[41px] text-[3px]">
        <div className="flex flex-col items-center gap-[2px]">
          <Duo a="CW" b="uPulse" box="h-[9px] w-[25px] bg-[#3a445d]" on="bg-white text-[#222]" />
          MICROPULSE
        </div>
        <div className="ml-[22px] flex flex-col items-center gap-[5px] pt-[3px]">
          <Range name="Aiming Beam" value={47} track="#2a3145" className="h-[3px] w-[61px]" />
          AIMING BEAM
        </div>
      </div>
      <p className="h-[7px] shrink-0 border-b border-white/20 pt-px pl-[6px] text-[3px] text-white/25">STATUS</p>
      <div className="grid shrink-0 grid-cols-[60px_70px_61px] pt-[6px]">
        {order.map((k, i) => (
          <div key={k} className="flex flex-col items-center">
            <Pulse kind={k} className="h-[8px] w-[12px]" />
            <p className="relative mt-px text-[11px] font-bold">
              {vals[i]}
              <span className="absolute right-[-9px] bottom-px text-[3px] font-normal">{i ? "ms" : "mW"}</span>
            </p>
            <svg viewBox="-25 -20 50 44" className="h-[44px] w-[50px]" role="img" aria-label={k}>
              <path d={arc(23, -40, 220)} fill="none" stroke="#8a90a1" strokeWidth=".8" />
              <circle r={dots[i]} fill="#3d6bd6" />
            </svg>
          </div>
        ))}
      </div>
      <footer className="mt-auto flex h-[17px] shrink-0 items-end pl-px text-[4px]">
        <button className="h-[17px] w-[33px] rounded-t-full bg-[#3d6bd6] font-bold underline">Main</button>
        <button className="ml-[2px] h-[17px] w-[33px] rounded-t-full bg-[#2f374b] text-white/60">Settings</button>
        <button className="ml-px h-[17px] w-[33px] rounded-t-full bg-[#2f374b] text-white/60">Presets</button>
        <p className="mb-[3px] ml-[5px] text-center text-[3px] leading-[5px] whitespace-nowrap text-white/70">
          <span className="text-[#3d6bd6]">PRESET</span> Dr. Norlase VRBP
          <br />
          Jan. 1, 2017 | <b className="text-white">10:10 AM</b>
        </p>
        <div className="mr-[6px] mb-1 ml-auto flex gap-[4px]">
          <Volume2 className="size-[7px]" />
          <Mic className="size-[7px]" />
          <CircleHelp className="size-[7px]" />
        </div>
      </footer>
    </Panel>
  );
}

/* Counter, micropulse, aiming beam and laser strip. */
interface StripProps {
  h: string;
  card?: string;
  duoBox?: string;
  duoOn?: string;
  fill?: string;
  track?: string;
  sliderBox?: string;
}

function Strip({
  h,
  card = "",
  duoBox = "border border-white/50",
  duoOn = "text-white",
  fill = "#fff",
  track = "transparent",
  sliderBox = "border border-white/60",
}: StripProps) {
  const cell = `flex w-[35px] flex-col items-center justify-center gap-[2px] text-[3px] ${card}`;
  return (
    <div className={`grid shrink-0 grid-cols-[56px_34px_56px_32px] justify-items-center ${h}`}>
      <div className={cell}>
        <MiniCounter />
      </div>
      <div className={cell}>
        <Duo a="CW" b="uPulse" box={`h-[7px] w-[21px] ${duoBox}`} on={duoOn} />
        <span className="text-white/70">MICROPULSE</span>
      </div>
      <div className={cell}>
        <Range name="Aiming Beam" value={46} fill={fill} track={track} className={`my-px h-[5px] w-[31px] ${sliderBox}`} thumb={T_M} />
        <span className="text-white/70">AIMING BEAM</span>
      </div>
      <div className={cell}>
        <Toggle name="Laser" text="STBY" box="h-[7px] w-[17px] rounded-full border border-white/50" knob="-ml-px size-[7px] rounded-full bg-white" textClass="text-[2px] text-white/80" />
        <span className="text-white/70">LASER</span>
      </div>
    </div>
  );
}

const SLATE = "bg-[#39435a]";

function GreenCurves() {
  const knobs = [68, 28, 73];
  return (
    <Panel bg={SLATE}>
      <Header cols={TABS_C} bg="bg-[#333c54]" icons={HEAD_D} />
      <Strip h="h-[19px] items-stretch" card="rounded-b-[3px] bg-[#222b3d]" fill="#b5d334" duoBox="border border-white/60" duoOn="bg-[#b5d334] text-[#222]" />
      <div className="flex flex-col gap-px pt-[4px] pl-[10px]">
        {KINDS.map((k, i) => {
          const y = (x: number) => 27 - 24 * Math.pow(x / 138, 2.2);
          const xs = Array.from({ length: 24 }, (_, j) => j * 6);
          return (
            <div key={k} className="flex items-center">
              <div className="relative h-8">
                <svg viewBox="-2 0 144 32" className="h-8 w-[144px]" role="img" aria-label={k}>
                  {i === 0 && <path d={`M0 28L34 26L68 ${y(68)}V28z`} fill="#b5d334" />}
                  <path d="M0 28H138V3" fill="none" stroke="#aab0c0" strokeWidth=".6" />
                  <polyline points={xs.map((x) => `${x},${y(x)}`).join(" ")} fill="none" stroke="#fff" strokeWidth="1.200" />
                  {i === 0 && (
                    <>
                      <rect x="57" y="12" width="22" height="6" fill="#b5d334" />
                      <text x="68" y="16.500" textAnchor="middle" fontSize="3.500" fill="#3b4a12">
                        175 200 225
                      </text>
                    </>
                  )}
                  <circle cx={knobs[i]} cy={y(knobs[i])} r="3.800" fill="#fff" opacity=".5" />
                  <circle cx={knobs[i]} cy={y(knobs[i])} r="2.600" fill="#fff" />
                  <PulseMark kind={k} x={108} y={17} w={11} />
                  <text x="119" y="26" fontSize="3.500" fill="#fff">
                    {k.toUpperCase()}
                  </text>
                </svg>
                <p className="absolute top-[2px] left-0 flex items-center gap-[2px] text-[13px] font-bold">
                  {TRIO[i][0]} <span className="mt-[5px] text-[4px]">{TRIO[i][1]}</span>
                </p>
              </div>
              {[false, true].map((up) => (
                <button key={String(up)} aria-label={up ? "Increase" : "Decrease"} className="ml-[3px] flex size-[10px] items-center justify-center rounded-full bg-[#2f5bb5]">
                  <svg viewBox="0 0 8 8" className="size-[5px]" fill="#c6dc4f" aria-hidden>
                    <path d={up ? "M4 0l3 7-3-1-3 1z" : "M4 8L1 1l3 1 3-1z"} />
                  </svg>
                </button>
              ))}
            </div>
          );
        })}
      </div>
      <EndFooter conn="text" />
    </Panel>
  );
}

function SideBars() {
  const vals: [string, string, number][] = [
    ["300", "mW", 30],
    ["50", "ms", 13],
    ["100", "ms", 20],
  ];
  return (
    <Panel bg="bg-[#242c3f]">
      <Header cols={TABS_C} bg={BAR} icons={HEAD_D} />
      <div className="flex flex-1">
        <div className="w-[43px] bg-[#3a445d] pt-[8px]">
          <SideControls solid />
        </div>
        <div className="grid grid-cols-[54px_40px_52px]">
          {vals.map(([v, u, n], i) => (
            <div key={v} className="flex flex-col items-center pt-[7px]">
              <p className="relative text-[14px] font-bold">
                {v}
                <span className="absolute right-[-6px] bottom-px text-[3px] font-normal">{u}</span>
              </p>
              <button aria-label="Increase" className="flex size-[6px] items-center justify-center rounded-full bg-white text-[6px] font-bold text-[#222a3b]">
                +
              </button>
              <VRange name={KINDS[i]} value={n} className="mt-[2px] h-[64px] w-[9px]" thumb={T_WHITE} />
              <button aria-label="Decrease" className="mt-[3px] flex size-[6px] items-center justify-center rounded-full bg-white text-[6px] font-bold text-[#222a3b]">
                −
              </button>
              <Pulse kind={KINDS[i]} className="mt-[2px] h-[9px] w-[12px]" />
              <span className="mt-[2px] text-[4px]">{KINDS[i].toUpperCase()}</span>
            </div>
          ))}
        </div>
      </div>
      <EndFooter conn="text" />
    </Panel>
  );
}

function Nodes() {
  const rows: { nodes: [number, number, string][]; at: number }[] = [
    { at: 32, nodes: [[6, 1, ""], [20, 1, ""], [59, 3, "400"], [99, 4.5, "1,000"], [133, 7, "1,500"]] },
    { at: 15, nodes: [[40, 3, "100"], [83, 3.6, "500"], [133, 7, "1,500"]] },
    { at: 30, nodes: [[6, 1, ""], [60, 3.4, "600"], [88, 4.5, "1,000"], [133, 7, "3000"]] },
  ];
  return (
    <Panel bg={SLATE}>
      <Header cols={TABS_C} bg="bg-[#333c54]" icons={HEAD_D} />
      <Strip h="h-[19px] items-stretch" card="rounded-b-[3px] bg-[#222b3d]" fill="#b5d334" duoBox="border border-white/60" duoOn="bg-[#b5d334] text-[#222]" />
      <div className="pt-px pl-[6px]">
        {rows.map((r, i) => (
          <div key={KINDS[i]} className="flex h-[33px] items-center">
            <svg viewBox="-17 -14 34 28" className="h-[28px] w-[34px]" role="img" aria-label={`${KINDS[i]} ${TRIO[i][0]}`}>
              <circle r="12.500" fill={i ? "none" : "#8ba83a"} stroke={i ? "#c3c7d2" : "none"} strokeWidth=".8" />
              {i === 0 && (
                <>
                  <circle cx="-13" r="3.600" fill="#fff" />
                  <circle cx="13" r="3.600" fill="#fff" />
                  <text x="-13" y="1" fontSize="3" textAnchor="middle" fill="#556">
                    175
                  </text>
                  <text x="13" y="1" fontSize="3" textAnchor="middle" fill="#556">
                    225
                  </text>
                </>
              )}
              <text y="3" textAnchor="middle" fontSize="9" fontWeight="500" fill="#fff">
                {TRIO[i][0]}
              </text>
              <text y="7.500" textAnchor="middle" fontSize="3" fill="#dde">
                {TRIO[i][1]}
              </text>
            </svg>
            <svg viewBox="0 0 142 28" className="h-[28px] w-[142px]" role="img" aria-label={`${KINDS[i]} scale`}>
              <PulseMark kind={KINDS[i]} x={5} y={4} w={11} />
              <text x="16" y="13" fontSize="3.500" fill="#fff" fontStyle="italic">
                {KINDS[i].toUpperCase()}
              </text>
              <path d="M6 20H133" stroke="#c3c7d2" strokeWidth=".9" />
              {r.nodes.map(([x, s, t]) => (
                <g key={x}>
                  <circle cx={x} cy="20" r={s} fill="#fff" />
                  <text x={x} y="21" fontSize="2.500" textAnchor="middle" fill="#556">
                    {t}
                  </text>
                </g>
              ))}
              {i === 0 && <circle cx={r.at} cy="20" r="4" fill="none" stroke="#9fbf36" strokeWidth="1.200" />}
              <circle cx={r.at} cy="20" r="2.500" fill="#e8ebdf" />
              <path d={`M${r.at - 5.5} 17.500l-3 2.500 3 2.500M${r.at + 5.5} 17.500l3 2.500-3 2.500`} fill="none" stroke="#b5d334" strokeWidth="1.300" />
            </svg>
          </div>
        ))}
      </div>
      <EndFooter conn="text" />
    </Panel>
  );
}

interface LineRow {
  value: string;
  at: number;
  knob: number;
  ticks: [number, string][];
}

function LinePanel({
  bg,
  header,
  strip,
  rows,
  variant,
  footer,
}: {
  bg: string;
  header: ReactNode;
  strip: ReactNode;
  rows: LineRow[];
  variant: "blue" | "green" | "plain";
  footer: ReactNode;
}) {
  const sides: [string, string][] = [
    ["175", "225"],
    ["15", "25"],
    ["225", "275"],
  ];
  return (
    <Panel bg={bg}>
      {header}
      {strip}
      {rows.map((r, i) => {
        const hot = variant !== "blue" && i === 0;
        const side =
          variant === "blue"
            ? "flex size-[11px] items-center justify-center rounded-full bg-[#2f66dd] text-[4px] font-normal text-[#1a3a86]"
            : hot && variant === "green"
              ? "flex size-[9px] items-center justify-center rounded-full bg-[#3fae8a] text-[3px] font-normal text-[#1d6b52]"
              : hot
                ? "text-[6px] font-normal text-white/50"
                : "size-[3px] rounded-full bg-white/40";
        return (
          <div key={KINDS[i]} className="flex h-[34px] shrink-0">
            <div className="flex w-[46px] flex-col items-center pt-[6px]">
              <Pulse kind={KINDS[i]} className="h-[14px] w-[20px] shrink-0" />
              <span className="mt-[2px] text-[5px] font-medium">{KINDS[i].toUpperCase()}</span>
            </div>
            <div className="w-[135px] pt-[3px]">
              <div className="flex h-[13px] items-center">
                <div
                  className={`flex shrink-0 -translate-x-1/2 items-center font-bold ${
                    variant === "blue" ? "gap-[4px] rounded-full bg-[#2b3550]/60" : "gap-[3px]"
                  } text-[11px]`}
                  style={{ marginLeft: r.at - 46 }}
                >
                  <span className={side}>{variant === "blue" || hot ? sides[i][0] : ""}</span>
                  {hot && variant === "green" ? (
                    <span className="flex size-[19px] items-center justify-center rounded-full bg-[#27966f] text-[8px]">{r.value}</span>
                  ) : (
                    <span>{r.value}</span>
                  )}
                  <span className={side}>{variant === "blue" || hot ? sides[i][1] : ""}</span>
                </div>
              </div>
              <div className="flex h-[9px] items-center">
                <Range
                  name={KINDS[i]}
                  value={((r.knob - 46) / 133) * 100}
                  fill={variant === "plain" ? (hot ? "#35b79a" : "#fff") : "#5c667f"}
                  track={variant === "plain" ? "#6f82b8" : "#5c667f"}
                  thumb={variant === "plain" ? (hot ? T_RING_L : T_RING) : T_PLAIN}
                  className={variant === "plain" && !hot ? "h-px w-[133px]" : "h-[2px] w-[133px]"}
                />
              </div>
              <div className="relative h-[4px] text-[4px] text-white/20">
                {r.ticks.map(([x, t]) => (
                  <span key={x} className="absolute -translate-x-1/2" style={{ left: x - 46 }}>
                    {t}
                  </span>
                ))}
              </div>
            </div>
          </div>
        );
      })}
      {footer}
    </Panel>
  );
}

const rowsOf = (at: number[], knob: number[], t: string[][], x: number[][]): LineRow[] =>
  KINDS.map((_, i) => ({
    value: TRIO[i][0],
    at: at[i],
    knob: knob[i],
    ticks: t[i].map((s, j) => [x[i][j], s] as [number, string]),
  }));

/* ---------- dial family ---------- */

interface Dial {
  end: number;
  color: string;
  ticks: [number, string][];
}

interface GaugeTheme {
  disc?: string;
  inner?: string;
  ring?: string;
  glow?: boolean;
  knob?: string;
  buttons?: boolean;
}

function Gauge({ kind, dial, t }: { kind: Kind; dial: Dial; t: GaugeTheme }) {
  const r = t.disc ? 25 : 26;
  const [kx, ky] = pt(dial.end, r);
  const big = t.buttons;
  return (
    <svg viewBox="-30 -28 60 56" className="h-[56px] w-[60px] shrink-0 overflow-visible" role="img" aria-label={`${kind} dial`}>
      {t.disc && <circle r="26" fill={t.disc} />}
      {t.inner && <circle r="15" fill={t.inner} />}
      {t.ring && <path d={arc(r, 130, 410)} fill="none" stroke={t.ring} strokeWidth="2.600" strokeLinecap="round" />}
      {t.glow && <path d={arc(26.500, 200, 410)} fill="none" stroke="#7c7c7c" strokeWidth="1.600" />}
      <path d={arc(r, 130, dial.end)} fill="none" stroke={dial.color} strokeWidth="5" strokeLinecap="round" />
      {dial.ticks.map(([a, l]) => {
        const [x, y] = pt(a, r + (t.disc ? 1 : 0));
        const [lx, ly] = pt(a, r - 8);
        return (
          <g key={l}>
            <circle cx={x} cy={y} r=".8" fill="#fff" />
            <text x={lx} y={ly + 1} fontSize="3.500" textAnchor="middle" fill="#fff" opacity=".4">
              {l}
            </text>
          </g>
        );
      })}
      <circle cx={kx} cy={ky} r="2.900" fill={t.knob ?? "#fff"} />
      {big ? <PulseMark kind={kind} x={-11} y={-10} w={22} /> : <PulseMark kind={kind} x={-8.5} y={-10} w={17} />}
      <text y={big ? 14 : 8.5} textAnchor="middle" fontSize={big ? 5.5 : 4} fontWeight="500" fill="#fff">
        {kind.toUpperCase()}
      </text>
      {t.buttons &&
        [-9, 9].map((x) => (
          <g key={x} stroke="#fff" strokeWidth=".8" fill="none">
            <circle cx={x} cy="24.500" r="3.600" />
            <path d={x < 0 ? "M-11 24.500h4" : "M7 24.500h4M9 22.500v4"} />
          </g>
        ))}
    </svg>
  );
}

type Side = "none" | "btn" | "plain" | "nums" | "circle";

function SideMark({ kind, text, cls }: { kind: Side; text: string; cls: string }) {
  if (kind === "none") return <span />;
  if (kind === "nums") return <span className="text-[4px] text-white/50">{text}</span>;
  return (
    <button
      aria-label={text}
      className={`flex size-[10px] items-center justify-center rounded-full leading-none ${
        kind === "circle" ? "text-[4px]" : "text-[9px] font-medium"
      } ${cls}`}
    >
      {text}
    </button>
  );
}

interface DialsProps {
  values?: string[];
  dials: Dial[];
  sides: Side[];
  sideClass: string[];
  gauge: GaugeTheme;
  top: string;
  gap: string;
  swoosh?: string;
  glowFirst?: boolean;
}

const NUMS: [string, string][] = [
  ["175", "225"],
  ["15", "25"],
  ["225", "275"],
];

function Dials({ values = ["200", "20", "250"], dials, sides, sideClass, gauge, top, gap, swoosh, glowFirst }: DialsProps) {
  return (
    <div className={`grid min-h-0 shrink-0 grid-cols-[59px_60px_64px] pl-[7px] ${top}`}>
      {KINDS.map((k, i) => {
        const numeric = sides[i] === "nums" || sides[i] === "circle";
        return (
          <div key={k} className="flex flex-col items-center">
            <div className="relative grid grid-cols-[10px_26px_10px] items-center justify-items-center">
              {swoosh && i === 0 && (
                <svg viewBox="0 0 48 12" className="absolute -top-[6px] h-3 w-12" aria-hidden>
                  <path d="M1 11Q24-9 47 11Q24-5.500 1 11z" fill={swoosh} />
                </svg>
              )}
              <SideMark kind={sides[i]} text={numeric ? NUMS[i][0] : "−"} cls={sideClass[i]} />
              <span className="h-[13px] text-[12px] leading-[13px] font-bold">{values[i]}</span>
              <SideMark kind={sides[i]} text={numeric ? NUMS[i][1] : "+"} cls={sideClass[i]} />
            </div>
            <span className="h-[4px] text-[4px] font-medium">{i ? "ms" : "mW"}</span>
            <div className={gap}>
              <Gauge kind={k} dial={dials[i]} t={glowFirst && i === 0 ? { ...gauge, glow: true } : gauge} />
            </div>
          </div>
        );
      })}
    </div>
  );
}

const discDials = (c: [string, string, string]): Dial[] => [
  { end: 185, color: c[0], ticks: [[297, "800"], [176, "150"], [48, "1500"]] },
  { end: 146, color: c[1], ticks: [[173, "50"], [305, "500"], [48, "1500"]] },
  { end: 211, color: c[2], ticks: [[178, "250"], [310, "1250"], [48, "3000"]] },
];
const ringDials = (c: [string, string, string]): Dial[] => [
  { end: 183, color: c[0], ticks: [[130, "0"], [192, "300"], [270, "600"], [348, "1000"], [50, "1500"]] },
  { end: 145, color: c[1], ticks: [[130, "0"], [192, "200"], [270, "500"], [348, "800"], [50, "2000"]] },
  { end: 213, color: c[2], ticks: [[130, "0"], [192, "400"], [270, "800"], [348, "1250"], [50, "3000"]] },
];
const plainDials = (c: string): Dial[] => [
  { end: 180, color: c, ticks: [] },
  { end: 142, color: c, ticks: [] },
  { end: 206, color: c, ticks: [] },
];

const HEAD_F: IconKey[] = ["conn", "q", "vol", "foot", "date"];

function ThemedDials({
  bg,
  bar,
  foot,
  disc,
  inner,
  colors,
  sides,
  sideClass,
  swoosh,
  glowFirst,
  active,
}: {
  bg: string;
  bar: string;
  foot: string;
  disc: string;
  inner: string;
  colors: [string, string, string];
  sides: Side[];
  sideClass: string;
  swoosh?: string;
  glowFirst?: boolean;
  active?: string;
}) {
  return (
    <Panel bg={bg}>
      <Header cols={TABS_F} bg={bar} icons={HEAD_F} end="gap-[5px] pr-[10px]" active={active} />
      <Strip h="h-[26px] items-center border-b border-white/50" />
      <Dials
        dials={discDials(colors)}
        sides={sides}
        sideClass={[sideClass, sideClass, sideClass]}
        gauge={{ disc, inner }}
        top="pt-[13px]"
        gap="mt-[3px]"
        swoosh={swoosh}
        glowFirst={glowFirst}
      />
      <Status bg={foot} h="h-[14px]">
        <Small text="END" size="text-[4px]" className="mr-[2px] ml-auto h-[11px] w-[20px] bg-[#dc6462] text-white" />
      </Status>
    </Panel>
  );
}

function CaptionStrip({ dark }: { dark?: boolean }) {
  const c = dark ? "text-[#242c3f]" : "text-white";
  return (
    <div className="grid h-[28px] shrink-0 grid-cols-[55px_34px_60px_31px] justify-items-center bg-[#3b4660] pt-[5px] text-[5px] whitespace-nowrap">
      <div className="flex flex-col items-center gap-[2px]">
        <span className={c}>LASER</span>
        <Toggle name="Laser" text="STBY" box="h-[11px] w-[24px] rounded-full bg-[#222b40]" knob="ml-px size-[8px] rounded-full bg-[#333d55]" textClass="text-[3px] text-white" />
      </div>
      <div className="flex flex-col items-center gap-[2px]">
        <span className={c}>MICROPULSE</span>
        <Duo a="CW" b="uPulse" box="h-[11px] w-[30px] bg-[#2c364d]" on="bg-[#222b40] text-white" />
      </div>
      <div className="flex flex-col items-center gap-[5px]">
        <span className={c}>AIMING BEAM</span>
        <Range name="Aiming Beam" value={50} fill="#2a3349" track="#2a3349" className="h-[4px] w-[34px]" thumb={T_GRAY_S} />
      </div>
      <div className={`flex flex-col items-center text-[3px] ${dark ? "gap-[3px]" : "gap-[2px]"} ${c}`}>
        <b className="text-[4px] text-white">0</b>
        COUNTER
        <b className="text-[4px] text-white">200</b>
        SPOT SIZE
      </div>
    </div>
  );
}

function BlueDials({ mode }: { mode: "buttons" | "faint" | "bright" }) {
  const blue = "#2563c9";
  return (
    <Panel bg="bg-[#202a43]">
      <Header cols={TABS_D} bg={BAR} icons={HEAD_F} end="gap-[4px] pr-[10px]" />
      <CaptionStrip dark={mode !== "bright"} />
      {mode === "buttons" ? (
        <Dials dials={plainDials(blue)} sides={["none", "none", "none"]} sideClass={["", "", ""]} gauge={{ ring: "#38435c", buttons: true }} top="pt-[7px]" gap="" />
      ) : (
        <Dials
          dials={discDials([blue, blue, blue])}
          sides={["circle", "circle", "circle"]}
          sideClass={Array(3).fill(mode === "bright" ? "bg-[#2c4a94] text-[#8fa6dd]" : "border border-white/10 bg-[#222d49] text-white/50")}
          gauge={{ disc: "#2b3650", inner: "#202a43" }}
          top="pt-[8px]"
          gap="mt-[2px]"
        />
      )}
      <EndFooter bg="bg-[#75829a]" conn="none" endBg="bg-[#cfd3de] text-[#1c2232]" endW="w-[31px]" />
    </Panel>
  );
}

function CharcoalDials() {
  return (
    <Panel bg="bg-[#454548]">
      <Header tabs={["MAIN", "SETTINGS", "PRESETS"]} cols={`${TABS_CAPS} [&>button:first-child]:bg-[#3a5588]`} bg="bg-[#2b2b2d]" icons={["q", "vol", "foot", "date"]} end="gap-[6px] pr-[10px]" active="border-[#3a5588]" />
      <div className="flex h-[34px] shrink-0 bg-[#2f2f31] text-[3px]">
        <div className="grid w-[134px] grid-cols-[30px_26px_48px_30px] grid-rows-[8px_1fr] justify-items-center border-r border-white/10">
          <span className="self-center text-white/50">LASER STATUS</span>
          <span className="self-center text-white/50">LASER MODE</span>
          <span className="self-center text-white/50">AIMING BEAM</span>
          <button aria-label="Reset" className="flex w-full items-center justify-center bg-black text-[4px]">
            ↻
          </button>
          <div className="flex flex-col items-center gap-[3px] pt-[3px]">
            <b>STANDBY</b>
            <Toggle name="Laser" text="●" box="h-[9px] w-[21px] rounded-full bg-[#242426]" knob="size-[9px] rounded-full bg-[#f4c030]" />
            <span className="text-white/30">READY</span>
          </div>
          <div className="flex flex-col items-center gap-[3px] pt-[3px]">
            <b>CW</b>
            <Toggle name="Mode" box="h-[9px] w-[21px] rounded-full bg-[#242426]" knob="size-[9px] rounded-full bg-[#4b4b4e]" />
            <span className="text-white/30">uPULSE</span>
          </div>
          <Range name="Aiming Beam" value={44} fill="#fff" track="#3a3a3d" className="mt-[10px] h-[5px] w-[37px]" />
          <b className="mt-[10px] text-[5px]">1.000</b>
        </div>
        <div className="flex flex-1 items-center justify-center pt-[6px]">
          <Small text="END" className="h-[9px] w-[18px] bg-[#ee6f6b] text-white" />
        </div>
      </div>
      <Dials
        values={["200", "20", "350"]}
        dials={ringDials(["#25cf8b", "#4a85dc", "#4a85dc"])}
        sides={["nums", "plain", "plain"]}
        sideClass={["", "text-white/50", "text-white/50"]}
        gauge={{ ring: "#7f7f82" }}
        top="pt-[13px]"
        gap="mt-px"
        swoosh="#2d9c8f"
      />
      <footer className="mt-auto flex h-[9px] shrink-0 items-center justify-between bg-[#2b2b2d] px-[3px] text-[3px] text-white/30">
        <Sun className="size-[5px]" />
        <span>15.4 &nbsp;•&nbsp; SPOT SIZE 200 &nbsp;•&nbsp; LASER OUTPUT 532.0 PULSE</span>
        <span />
      </footer>
    </Panel>
  );
}

function CardStrip({ top }: { top: string }) {
  const card = "flex h-[17px] items-center gap-[3px] bg-[#2c3a4d] px-1 text-[3px]";
  return (
    <div className={`mx-2 flex shrink-0 gap-[2px] whitespace-nowrap ${top}`}>
      <div className={`w-[50px] ${card}`}>
        <Toggle name="Laser" text="●" box="h-[9px] w-[18px] rounded-full bg-[#1e2938]" knob="size-[9px] rounded-full bg-[#f4c030]" textClass="text-[4px] text-white/50" />
        <span className="text-white/40">
          LASER STATUS
          <br />
          <b className="text-white">STANDBY</b>
        </span>
      </div>
      <div className={`w-[50px] ${card}`}>
        <Toggle name="Mode" box="h-[9px] w-[18px] rounded-full bg-[#1e2938]" knob="size-[9px] rounded-full bg-white" />
        <span className="text-white/40">
          LASER MODE
          <br />
          <b className="text-white">CW</b>
        </span>
      </div>
      <div className={`flex-1 ${card}`}>
        <Range name="Aiming Beam" value={44} fill="#fff" track="#3b4759" className="ml-[3px] h-[5px] w-[36px]" />
        <span className="text-white/40">AIMING BEAM</span>
      </div>
    </div>
  );
}

function TealDials() {
  return (
    <Panel bg="bg-[#233142]">
      <Header tabs={["MAIN", "SETTINGS", "PRESETS"]} cols={TABS_CAPS} bg="bg-[#1d2836]" icons={HEAD_F} end="gap-[5px] pr-[10px]" />
      <CardStrip top="pt-[4px]" />
      <div className="mx-3 flex h-[7px] shrink-0 items-center justify-between text-[3px] text-white/30">
        <span className="flex h-[4px] w-[48px] items-center justify-between bg-[#2c3a4d]">
          COUNTER <b className="text-white">000</b>
        </span>
        <span>15.4 • SPOT SIZE 200 • LASER OUTPUT 532.0</span>
      </div>
      <Dials
        dials={ringDials(["#14b897", "#14b897", "#14b897"])}
        sides={["plain", "plain", "plain"]}
        sideClass={["text-white/50", "text-white/50", "text-white/50"]}
        gauge={{ ring: "#455567" }}
        top="pt-[10px]"
        gap="mt-px"
      />
      <Small text="END" size="text-[4px]" className="mt-[2px] mr-[2px] ml-auto h-[10px] w-[18px] bg-[#ee7470] text-white" />
    </Panel>
  );
}

function SlateDials() {
  return (
    <Panel bg="bg-[#253340]">
      <Header tabs={["MAIN", "SETTINGS", "PRESETS"]} cols={TABS_CAPS} bg="bg-[#222d39]" icons={["tri", "q", "vol", "foot", "date"]} end="gap-[6px] pr-[10px]" />
      <CardStrip top="pt-[6px]" />
      <Dials
        dials={ringDials(["#9ce04f", "#14b897", "#14b897"])}
        sides={["nums", "plain", "plain"]}
        sideClass={["", "text-white/50", "text-white/50"]}
        gauge={{ ring: "#455567" }}
        top="pt-[13px]"
        gap=""
        swoosh="#6cc04a"
      />
      <footer className="mt-auto mb-[3px] flex h-[10px] shrink-0 items-center gap-[3px] pr-2 pl-2 text-[3px] whitespace-nowrap text-white/30">
        <a href="#profile" className="leading-[4px] text-white underline">
          Dr. Norlase
          <br />
          Conduction Retinopexy
        </a>
        <span>• 15.4 • SPOT SIZE 200 • LASER OUTPUT 532.0</span>
        <span className="ml-auto flex h-[9px] items-center gap-[3px] bg-[#2c3a4d] px-[2px]">
          COUNT ↻ <b className="text-[4px] text-white">1.000</b>
        </span>
        <Small text="END" className="h-[9px] w-[18px] bg-[#ee7470] text-white" />
      </footer>
    </Panel>
  );
}

/* ---------- board ---------- */

function Column({ rows, children }: { rows: string; children: ReactNode }) {
  return <section className={`grid min-w-0 flex-1 content-start ${rows}`}>{children}</section>;
}

function Divider() {
  return (
    <div
      aria-hidden
      className="mt-[38px] mb-4 w-[3px] shrink-0 bg-[repeating-linear-gradient(#151515_0_10px,transparent_10px_15px)]"
    />
  );
}

const D_ROWS = "grid-rows-[157px_156px_163px_143px] pt-[52px]";
const LIME: [string, string, string] = ["#b4d334", "#b4d334", "#b4d334"];
const MINT: [string, string, string] = ["#93d8b8", "#93d8b8", "#93d8b8"];

export default function App() {
  return (
    <main className="flex min-h-screen gap-6 bg-white pr-8 pl-7 font-['Roboto',sans-serif] leading-none">
      <Column rows="grid-rows-[153px_158px_164px_143px] pt-[53px]">
        <EntryOne />
        <EntryThree />
        <EntrySkew />
        <Bars />
      </Column>
      <Column rows="grid-rows-[154px_156px_164px_143px] pt-[54px]">
        <EntryTwo />
        <EntryFour />
        <HalfDials />
        <Bars tubes />
      </Column>
      <Divider />
      <Column rows="grid-rows-[153px_157px_164px_143px] pt-[55px]">
        <Rings />
        <Curves />
        <Wheels />
        <Orbits />
      </Column>
      <Column rows={D_ROWS}>
        <GreenCurves />
        <BlueDials mode="buttons" />
        <SideBars />
        <Nodes />
      </Column>
      <Column rows={D_ROWS}>
        <LinePanel
          bg={SLATE}
          variant="blue"
          header={<Header cols={TABS_C} bg="bg-[#333c54]" icons={HEAD_D} />}
          strip={<Strip h="h-[19px] items-center" fill="#2452b5" duoBox="bg-[#2b3550]" sliderBox="" />}
          rows={rowsOf(
            [97, 70, 101],
            [80, 53, 84],
            [["150", "600", "1500"], ["100", "500", "1100"], ["250", "1000", "3000"]],
            [[69, 125, 176], [96, 133, 176], [84, 121, 176]],
          )}
          footer={<EndFooter conn="text" />}
        />
        <BlueDials mode="faint" />
        <BlueDials mode="bright" />
        <LinePanel
          bg={SLATE}
          variant="green"
          header={<Header cols={TABS_C} bg="bg-[#333c54]" icons={HEAD_D} />}
          strip={<Strip h="h-[19px] items-center" fill="#2b3550" duoBox="bg-[#2b3550]" sliderBox="" />}
          rows={rowsOf(
            [81, 53, 72],
            [81, 53, 72],
            [["150", "600", "1000", "1500"], ["50", "100", "500", "1100"], ["250", "600", "1500", "3000"]],
            [[69, 104, 139, 176], [67, 102, 139, 175], [72, 104, 139, 175]],
          )}
          footer={<EndFooter conn="text" />}
        />
      </Column>
      <Divider />
      <Column rows={D_ROWS}>
        <ThemedDials
          bg="bg-[#505050]"
          bar="bg-[#868686]"
          foot="bg-[#868686]"
          disc="#222222"
          inner="#505050"
          colors={["#b4d334", "#3b66dc", "#3b66dc"]}
          sides={["nums", "btn", "btn"]}
          sideClass="bg-[#3b66dc] text-white"
          swoosh="#a9cf3a"
          glowFirst
        />
        <CharcoalDials />
        <ThemedDials
          bg="bg-[#35505f]"
          bar="bg-[#5b7283]"
          foot="bg-[#5b7283]"
          disc="#293d50"
          inner="#35505f"
          colors={MINT}
          sides={["btn", "btn", "btn"]}
          sideClass="bg-[#60737f] text-white"
          active="border-[#f4c030]"
        />
        <LinePanel
          bg="bg-[#20356b]"
          variant="plain"
          header={
            <Header
              cols="grid-cols-[30px_32px_30px] [&>button:first-child]:bg-[#6b83bf]"
              bg="bg-[#3a5aa5]"
              icons={HEAD_D}
              end="gap-[4px] pr-[10px]"
            />
          }
          strip={<Strip h="h-[19px] items-center" duoBox="border border-white/60 bg-[#2a2f3c]" duoOn="bg-white text-[#222]" />}
          rows={rowsOf(
            [81, 53, 72],
            [81, 54, 72],
            [["150", "600", "1000", "1500"], ["50", "100", "500", "1100"], ["250", "600", "1500", "3000"]],
            [[69, 104, 139, 179], [68, 103, 140, 179], [72, 104, 140, 179]],
          )}
          footer={<EndFooter bg="bg-[#3a5aa5]" conn="text" endBg="bg-[#c5cbe0] text-[#1c2232]" />}
        />
      </Column>
      <Column rows="grid-rows-[154px_159px_163px_143px] pt-[52px]">
        <ThemedDials
          bg="bg-[#333333]"
          bar="bg-black"
          foot="bg-black"
          disc="#1a1a1a"
          inner="#333333"
          colors={LIME}
          sides={["btn", "btn", "btn"]}
          sideClass="bg-[#242424] text-[#b4d334]"
        />
        <ThemedDials
          bg="bg-[#05508a]"
          bar="bg-[#172a3a]"
          foot="bg-[#172a3a]"
          disc="#113d64"
          inner="#05508a"
          colors={LIME}
          sides={["btn", "btn", "btn"]}
          sideClass="bg-[#3a6f9e] text-white"
        />
        <TealDials />
        <SlateDials />
      </Column>
    </main>
  );
}
